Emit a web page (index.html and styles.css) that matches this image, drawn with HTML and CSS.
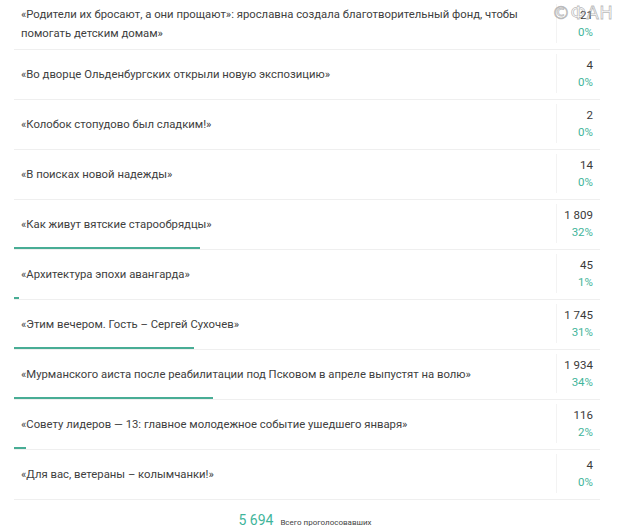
FILE: index.html
```html
<!DOCTYPE html>
<html lang="ru">
<head>
<meta charset="utf-8">
<link rel="stylesheet" href="styles.css">
</head>
<body>
<div class="poll">
  <div class="row">
    <div class="title">«Родители их бросают, а они прощают»: ярославна создала благотворительный фонд, чтобы помогать детским домам»</div>
    <div class="stats"><span class="num">21</span><span class="pct">0%</span></div>
    <div class="bar" style="width:0%"></div>
  </div>
  <div class="row">
    <div class="title">«Во дворце Ольденбургских открыли новую экспозицию»</div>
    <div class="stats"><span class="num">4</span><span class="pct">0%</span></div>
    <div class="bar" style="width:0%"></div>
  </div>
  <div class="row">
    <div class="title">«Колобок стопудово был сладким!»</div>
    <div class="stats"><span class="num">2</span><span class="pct">0%</span></div>
    <div class="bar" style="width:0%"></div>
  </div>
  <div class="row">
    <div class="title">«В поисках новой надежды»</div>
    <div class="stats"><span class="num">14</span><span class="pct">0%</span></div>
    <div class="bar" style="width:0%"></div>
  </div>
  <div class="row">
    <div class="title">«Как живут вятские старообрядцы»</div>
    <div class="stats"><span class="num">1 809</span><span class="pct">32%</span></div>
    <div class="bar" style="width:31.8%"></div>
  </div>
  <div class="row">
    <div class="title">«Архитектура эпохи авангарда»</div>
    <div class="stats"><span class="num">45</span><span class="pct">1%</span></div>
    <div class="bar" style="width:0.9%"></div>
  </div>
  <div class="row">
    <div class="title">«Этим вечером. Гость – Сергей Сухочев»</div>
    <div class="stats"><span class="num">1 745</span><span class="pct">31%</span></div>
    <div class="bar" style="width:30.7%"></div>
  </div>
  <div class="row">
    <div class="title">«Мурманского аиста после реабилитации под Псковом в апреле выпустят на волю»</div>
    <div class="stats"><span class="num">1 934</span><span class="pct">34%</span></div>
    <div class="bar" style="width:34%"></div>
  </div>
  <div class="row">
    <div class="title">«Совету лидеров — 13: главное молодежное событие ушедшего января»</div>
    <div class="stats"><span class="num">116</span><span class="pct">2%</span></div>
    <div class="bar" style="width:2%"></div>
  </div>
  <div class="row">
    <div class="title">«Для вас, ветераны – колымчанки!»</div>
    <div class="stats"><span class="num">4</span><span class="pct">0%</span></div>
    <div class="bar" style="width:0%"></div>
  </div>
  <div class="total"><span class="total-num">5 694</span><span class="total-label">Всего проголосовавших</span></div>
</div>
<div class="watermark" aria-hidden="true">©ФАН</div>
</body>
</html>
```

FILE: styles.css
```css
html, body {
  margin: 0;
  padding: 0;
  background: #fff;
}
body {
  font-family: Roboto, "Liberation Sans", Arial, sans-serif;
  color: #3a3a3a;
  width: 620px;
  height: 531px;
  overflow: hidden;
  position: relative;
}
.poll {
  margin-left: 14px;
  width: 586px;
}
.row {
  display: grid;
  grid-template-columns: 1fr 44px;
  grid-template-rows: 47px 2px;
  border-bottom: 1px solid #efefef;
}
.title {
  grid-column: 1;
  grid-row: 1;
  display: flex;
  align-items: center;
  padding-left: 7px;
  padding-right: 22px;
  padding-top: 1px;
  font-size: 11.3px;
  line-height: 19px;
  color: #404040;
}
.stats {
  grid-column: 2;
  grid-row: 1 / 3;
  display: flex;
  flex-direction: column;
  align-items: flex-end;
  justify-content: center;
  padding-right: 7px;
  margin: 4px 0 6px;
  border-left: 1px solid #f3f3f3;
  font-size: 11.5px;
  line-height: 17px;
}
.num {
  color: #3a3a3a;
}
.pct {
  color: #3fb59b;
}
.bar {
  grid-column: 1 / 3;
  grid-row: 2;
  height: 2px;
  background: #48ad95;
  justify-self: start;
}
.total {
  display: flex;
  justify-content: center;
  align-items: baseline;
  gap: 7px;
  padding-top: 12px;
  padding-right: 4px;
}
.total-num {
  font-size: 14px;
  color: #3fb59b;
}
.total-label {
  font-size: 8px;
  color: #444;
}
.watermark {
  position: absolute;
  top: 2px;
  left: 552px;
  font-family: "DejaVu Sans", sans-serif;
  font-size: 18px;
  letter-spacing: 0.5px;
  color: rgba(255,255,255,0.2);
  -webkit-text-stroke: 0.8px rgba(140,140,140,0.6);
}
```
